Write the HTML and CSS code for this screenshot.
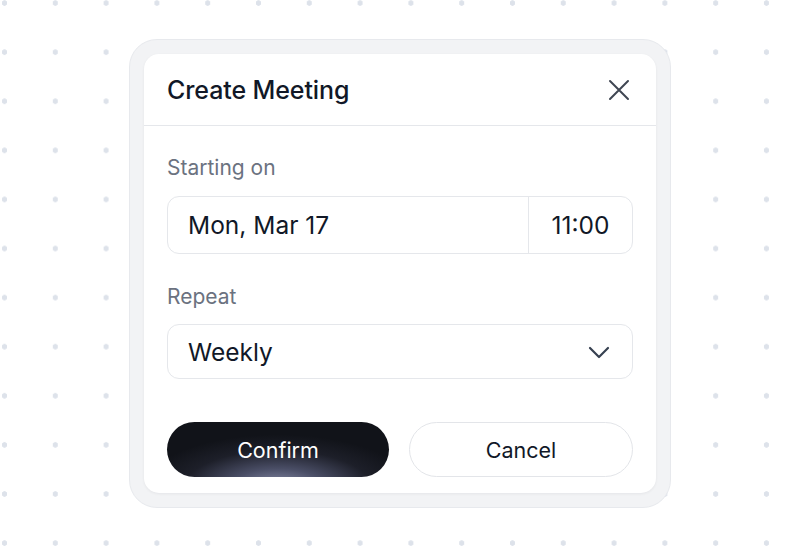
FILE: index.html
```html
<!DOCTYPE html>
<html lang="en">
<head>
  <meta charset="UTF-8">
  <title>Create Meeting</title>
  <link rel="stylesheet" href="styles.css">
</head>
<body>
  <div class="frame">
    <div class="dialog">
      <div class="dialog-header">
        <h2>Create Meeting</h2>
        <button class="close" aria-label="Close">
          <svg width="24" height="24" viewBox="0 0 24 24" fill="none" stroke="currentColor" stroke-width="2" stroke-linecap="round">
            <path d="M3 3L21 21M21 3L3 21"/>
          </svg>
        </button>
      </div>

      <div class="dialog-body">
        <div class="field">
          <label>Starting on</label>
          <div class="date-input">
            <span class="date">Mon, Mar 17</span>
            <span class="time">11:00</span>
          </div>
        </div>

        <div class="field field-repeat">
          <label>Repeat</label>
          <div class="select">
            <span>Weekly</span>
            <svg width="24" height="24" viewBox="0 0 24 24" fill="none" stroke="currentColor" stroke-width="2.2" stroke-linecap="round" stroke-linejoin="round">
              <path d="M3 8L12 17L21 8"/>
            </svg>
          </div>
        </div>

        <div class="actions">
          <button class="btn btn-primary">Confirm</button>
          <button class="btn btn-secondary">Cancel</button>
        </div>
      </div>
    </div>
  </div>
</body>
</html>
```

FILE: styles.css
```css
body {
  margin: 0;
  height: 100vh;
  display: flex;
  align-items: center;
  justify-content: center;
  font-family: 'Inter', 'Liberation Sans', sans-serif;
  background-color: #ffffff;
  background-image: radial-gradient(circle, #dde2ea 2.4px, transparent 3px);
  background-size: 50.8px 49.1px;
  background-position: -20.9px -21.5px;
  color: #111827;
}

.frame {
  background: #f2f3f5;
  border: 1px solid #e7e9ed;
  border-radius: 28px;
  padding: 14px;
}

.dialog {
  width: 512px;
  background: #ffffff;
  border-radius: 15px;
  box-shadow: 0 1px 3px rgba(17, 24, 39, 0.06);
}

.dialog-header {
  height: 71px;
  display: flex;
  align-items: center;
  justify-content: space-between;
  padding: 0 25px 0 23px;
  border-bottom: 1px solid #e5e7eb;
}

.dialog-header h2 {
  margin: 0;
  font-size: 25px;
  font-weight: 500;
  letter-spacing: -0.1px;
}

.close {
  border: none;
  background: none;
  padding: 0;
  color: #3f4652;
  display: flex;
}

.dialog-body {
  padding: 29px 23px 16px;
}

.field {
  margin-bottom: 30px;
}

.field label {
  display: block;
  font-size: 21px;
  line-height: 26px;
  color: #6b7280;
  margin-bottom: 15px;
}

.date-input {
  display: flex;
  height: 56px;
  border: 1px solid #e5e7eb;
  border-radius: 12px;
  font-size: 24.5px;
}

.date-input .date {
  flex: 1;
  display: flex;
  align-items: center;
  padding-left: 20px;
  border-right: 1px solid #e5e7eb;
}

.date-input .time {
  width: 103px;
  display: flex;
  align-items: center;
  justify-content: center;
}

.select {
  height: 53px;
  display: flex;
  align-items: center;
  justify-content: space-between;
  padding: 0 21px 0 20px;
  border: 1px solid #e5e7eb;
  border-radius: 12px;
  font-size: 24.5px;
  color: #111827;
}

.select svg {
  color: #374151;
}

.field-repeat {
  margin-bottom: 43px;
}

.field-repeat label {
  margin-bottom: 14px;
}

.actions {
  display: flex;
  gap: 20px;
}

.btn {
  flex: 1;
  height: 55px;
  border-radius: 28px;
  font-family: inherit;
  font-size: 21.5px;
  font-weight: 400;
  cursor: pointer;
}

.btn-primary {
  border: none;
  color: #ffffff;
  background: radial-gradient(ellipse 60% 95% at 50% 118%, #8c91ad 0%, #4a4e66 35%, #1d1f29 70%, #111319 100%);
}

.btn-secondary {
  background: #ffffff;
  border: 1px solid #e3e5e9;
  color: #111827;
}
```
